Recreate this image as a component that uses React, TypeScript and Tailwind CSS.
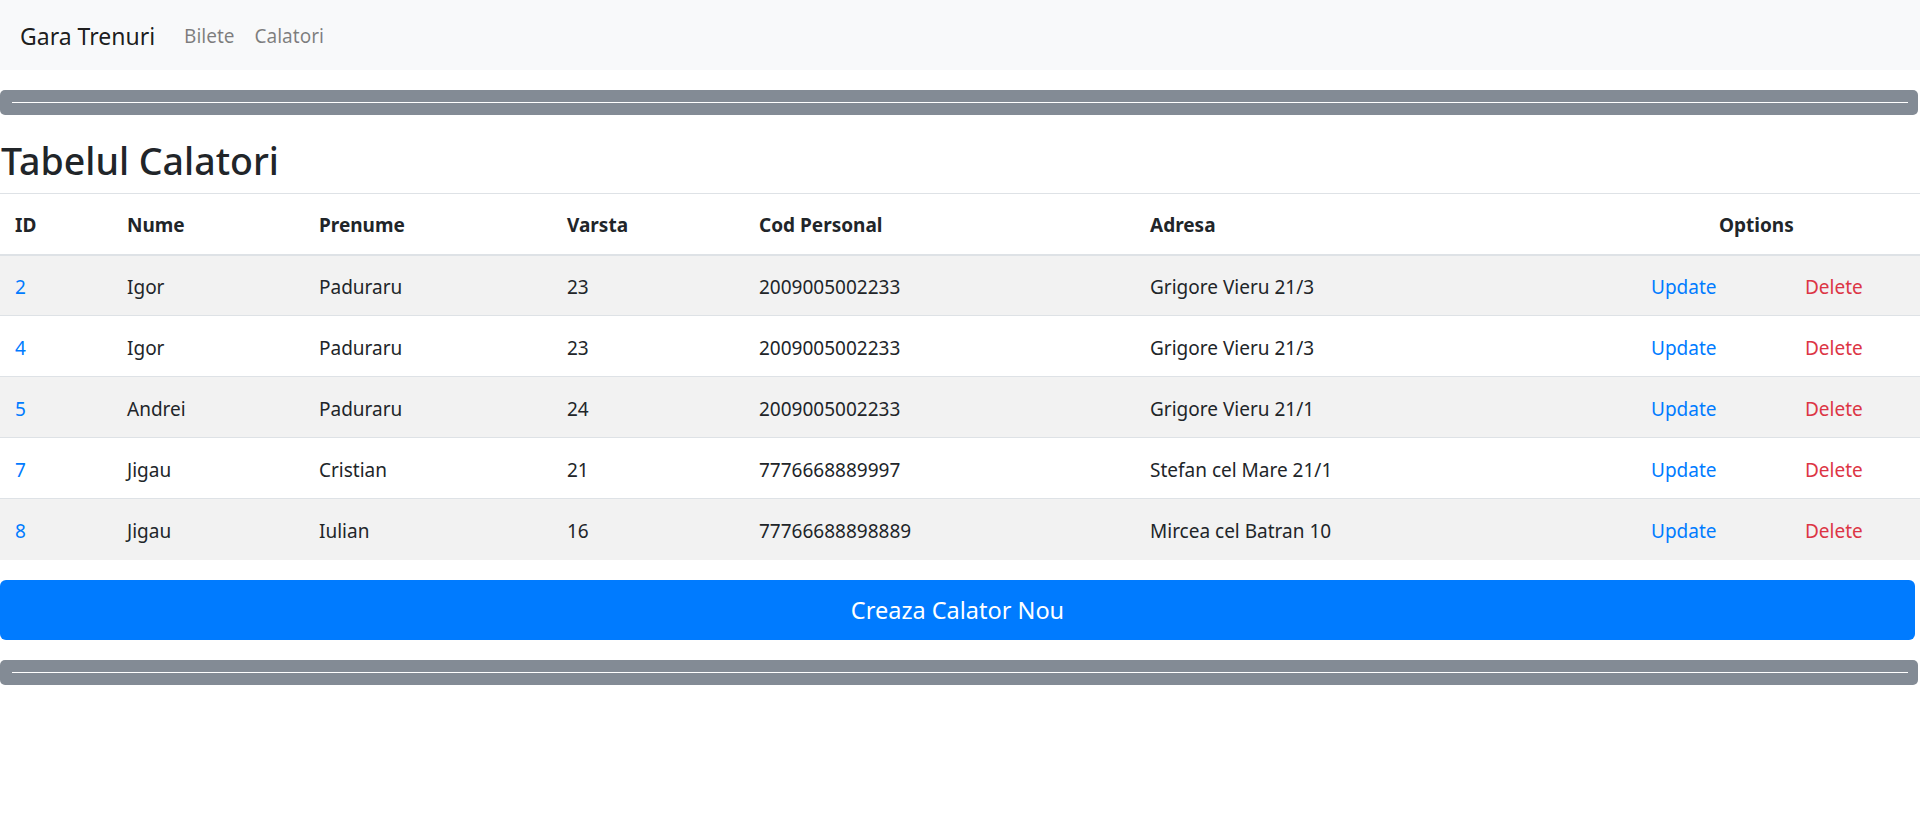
import React from 'react';

type Calator = {
  id: number;
  nume: string;
  prenume: string;
  varsta: number;
  cod: string;
  adresa: string;
};

const calatori: Calator[] = [
  { id: 2, nume: 'Igor', prenume: 'Paduraru', varsta: 23, cod: '2009005002233', adresa: 'Grigore Vieru 21/3' },
  { id: 4, nume: 'Igor', prenume: 'Paduraru', varsta: 23, cod: '2009005002233', adresa: 'Grigore Vieru 21/3' },
  { id: 5, nume: 'Andrei', prenume: 'Paduraru', varsta: 24, cod: '2009005002233', adresa: 'Grigore Vieru 21/1' },
  { id: 7, nume: 'Jigau', prenume: 'Cristian', varsta: 21, cod: '7776668889997', adresa: 'Stefan cel Mare 21/1' },
  { id: 8, nume: 'Jigau', prenume: 'Iulian', varsta: 16, cod: '77766688898889', adresa: 'Mircea cel Batran 10' },
];

function Divider() {
  return (
    <div className="mr-[2px] h-[25px] rounded-[5px] bg-[#838b95] pl-[12px] pr-[10px] flex items-center">
      <div className="h-px w-full bg-white" />
    </div>
  );
}

export default function App() {
  return (
    <div
      className="min-h-screen bg-white text-[#212529] text-[19px] leading-[1.5]"
      style={{ fontFamily: '"Noto Sans", "Open Sans", sans-serif' }}
    >
      {/* Navbar */}
      <nav className="h-[70px] bg-[#f8f9fa] flex items-center px-[20px] pt-[2px]">
        <span className="text-[23px] text-black/90 mr-[19px]">Gara Trenuri</span>
        <a className="px-[10px] text-[19px] text-black/50">Bilete</a>
        <a className="px-[10px] text-[19px] text-black/50">Calatori</a>
      </nav>

      <div className="mt-[20px]">
        <Divider />
      </div>

      <h2 className="mt-[20px] mb-[10px] h-[48px] text-[37.5px] leading-[48px] font-medium pl-[1px] pt-[2px]">
        Tabelul Calatori
      </h2>

      {/* Table */}
      <table className="w-full table-fixed border-collapse">
        <colgroup>
          <col className="w-[112px]" />
          <col className="w-[192px]" />
          <col className="w-[248px]" />
          <col className="w-[192px]" />
          <col className="w-[391px]" />
          <col className="w-[501px]" />
          <col className="w-[154px]" />
          <col className="w-[130px]" />
        </colgroup>
        <thead>
          <tr className="border-t border-[#dee2e6] border-b-2">
            <th className="h-[61px] px-[15px] pt-[2px] text-left font-bold">ID</th>
            <th className="px-[15px] pt-[2px] text-left font-bold">Nume</th>
            <th className="px-[15px] pt-[2px] text-left font-bold">Prenume</th>
            <th className="px-[15px] pt-[2px] text-left font-bold">Varsta</th>
            <th className="px-[15px] pt-[2px] text-left font-bold">Cod Personal</th>
            <th className="px-[15px] pt-[2px] text-left font-bold">Adresa</th>
            <th colSpan={2} className="pl-[83px] pr-[15px] pt-[2px] text-left font-bold">Options</th>
          </tr>
        </thead>
        <tbody>
          {calatori.map((c, i) => (
            <tr
              key={c.id}
              className={`border-t border-[#dee2e6] ${i % 2 === 0 ? 'bg-[#f2f2f2]' : 'bg-white'}`}
            >
              <td className="h-[61px] px-[15px] pt-[4px] text-[#007bff]">{c.id}</td>
              <td className="px-[15px] pt-[4px]">{c.nume}</td>
              <td className="px-[15px] pt-[4px]">{c.prenume}</td>
              <td className="px-[15px] pt-[4px]">{c.varsta}</td>
              <td className="px-[15px] pt-[4px]">{c.cod}</td>
              <td className="px-[15px] pt-[4px]">{c.adresa}</td>
              <td className="px-[15px] pt-[4px] text-[#007bff]">Update</td>
              <td className="px-[15px] pt-[4px] text-[#dc3545]">Delete</td>
            </tr>
          ))}
        </tbody>
      </table>

      <div className="mt-[20px] mr-[5px]">
        <button className="w-full h-[60px] rounded-[6px] bg-[#007bff] text-white text-[23.5px] pt-[2px]">
          Creaza Calator Nou
        </button>
      </div>

      <div className="mt-[20px]">
        <Divider />
      </div>
    </div>
  );
}
